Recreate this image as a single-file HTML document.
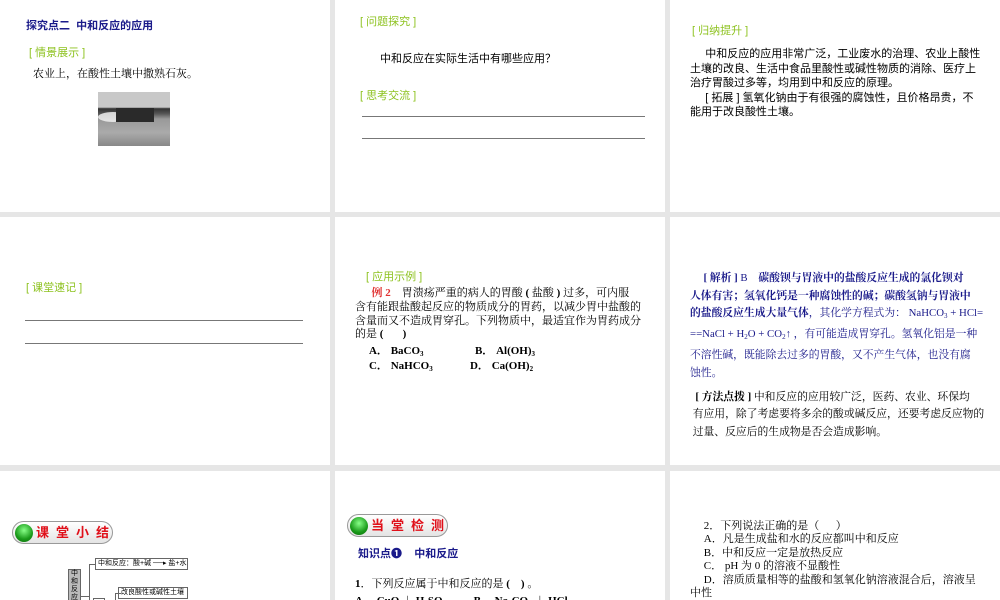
<!DOCTYPE html>
<html><head><meta charset="utf-8"><style>
*{margin:0;padding:0;box-sizing:border-box}
body{width:1000px;height:600px;background:#e6e6e6;position:relative;overflow:hidden;font-family:"Liberation Sans","Noto Sans CJK SC",sans-serif;color:#000}
.s{position:absolute;background:#fff;overflow:hidden}
.a{position:absolute;white-space:nowrap}
.g{color:#8dc21f;font-size:11px}
.serif{font-family:"Liberation Serif","Noto Serif CJK SC",serif}
.ln{position:absolute;height:1px;background:#777}
.pill{position:absolute;height:23px;border:1px solid #999;border-radius:12px;background:linear-gradient(#fff,#e4e4e4);overflow:hidden}
.dot{position:absolute;left:2px;top:2px;width:18px;height:18px;border-radius:50%;background:radial-gradient(circle at 50% 35%,#8f8,#1a9a1a 60%,#0a6a0a)}
.pt{position:absolute;left:23px;top:3px;color:#e0101a;font-weight:bold;font-size:13px;letter-spacing:7px;white-space:nowrap;line-height:16px;font-family:"Liberation Sans","Noto Sans CJK SC",sans-serif}
sub{font-size:7px;vertical-align:-2px}
</style></head><body>

<div class="s" style="left:0;top:0;width:330px;height:212px">
 <div class="a" style="left:26px;top:17px;font-size:11px;font-weight:bold;color:#1a1a8a">探究点二&nbsp; 中和反应的应用</div>
 <div class="a g" style="left:29px;top:44px">[ 情景展示 ]</div>
 <div class="a serif" style="left:33px;top:65px;font-size:11px">农业上，在酸性土壤中撒熟石灰。</div>
 <div class="a" style="left:98px;top:92px;width:72px;height:54px;background:linear-gradient(#c8c8c8 0,#c8c8c8 28%,#333 31%,#555 40%,#999 50%,#aaa 75%,#888 100%)"></div>
 <div class="a" style="left:98px;top:112px;width:30px;height:10px;background:#eee;border-radius:50%;opacity:.85"></div>
 <div class="a" style="left:116px;top:108px;width:38px;height:14px;background:#2a2a2a"></div>
</div>

<div class="s" style="left:335px;top:0;width:330px;height:212px">
 <div class="a g" style="left:25px;top:13px">[ 问题探究 ]</div>
 <div class="a" style="left:45px;top:50px;font-size:11px">中和反应在实际生活中有哪些应用？</div>
 <div class="a g" style="left:25px;top:87px">[ 思考交流 ]</div>
 <div class="ln" style="left:27px;top:116px;width:283px"></div>
 <div class="ln" style="left:27px;top:138px;width:283px"></div>
</div>

<div class="s" style="left:670px;top:0;width:330px;height:212px">
 <div class="a g" style="left:22px;top:22px">[ 归纳提升 ]</div>
 <div class="a" style="left:20px;top:47px;font-size:11px;line-height:14.6px">&nbsp;&nbsp;&nbsp;&nbsp;&nbsp;中和反应的应用非常广泛，工业废水的治理、农业上酸性<br>土壤的改良、生活中食品里酸性或碱性物质的消除、医疗上<br>治疗胃酸过多等，均用到中和反应的原理。<br>&nbsp;&nbsp;&nbsp;&nbsp;&nbsp;[ 拓展 ] 氢氧化钠由于有很强的腐蚀性，且价格昂贵，不<br>能用于改良酸性土壤。</div>
</div>

<div class="s" style="left:0;top:217px;width:330px;height:248px">
 <div class="a g" style="left:26px;top:62px">[ 课堂速记 ]</div>
 <div class="ln" style="left:25px;top:103px;width:278px"></div>
 <div class="ln" style="left:25px;top:126px;width:278px"></div>
</div>

<div class="s serif" style="left:335px;top:217px;width:330px;height:248px">
 <div class="a g" style="left:31px;top:51px;font-family:'Liberation Sans','Noto Sans CJK SC',sans-serif">[ 应用示例 ]</div>
 <div class="a" style="left:20px;top:70px;font-size:11px;line-height:13.8px"><span style="color:#e03030;font-weight:bold">&nbsp;&nbsp;&nbsp;&nbsp;&nbsp;&nbsp;例 2</span>&nbsp;&nbsp;&nbsp; 胃溃疡严重的病人的胃酸 <b>(</b> 盐酸 <b>)</b> 过多，可内服<br>含有能跟盐酸起反应的物质成分的胃药，以减少胃中盐酸的<br>含量而又不造成胃穿孔。下列物质中，最适宜作为胃药成分<br>的是 <b>(&nbsp;&nbsp;&nbsp;&nbsp;&nbsp;&nbsp; )</b></div>
 <div class="a" style="left:34px;top:125px;font-size:11px;font-weight:bold">A．&nbsp;BaCO<sub>3</sub></div>
 <div class="a" style="left:140px;top:125px;font-size:11px;font-weight:bold">B．&nbsp;Al(OH)<sub>3</sub></div>
 <div class="a" style="left:34px;top:140px;font-size:11px;font-weight:bold">C．&nbsp;NaHCO<sub>3</sub></div>
 <div class="a" style="left:135px;top:140px;font-size:11px;font-weight:bold">D．&nbsp;Ca(OH)<sub>2</sub></div>
</div>

<div class="s serif" style="left:670px;top:217px;width:330px;height:248px">
 <div class="a" style="left:20px;top:53px;font-size:10.8px;line-height:17.7px;color:#1a1a8a">&nbsp;&nbsp;&nbsp;&nbsp;&nbsp;<b>[ 解析 ]</b> B&nbsp;&nbsp;&nbsp; <b>碳酸钡与胃液中的盐酸反应生成的氯化钡对</b><br><b>人体有害；氢氧化钙是一种腐蚀性的碱；碳酸氢钠与胃液中</b><br><b>的盐酸反应生成大量气体</b>，其化学方程式为： NaHCO<sub>3</sub> + HCl=<br>==NaCl + H<sub>2</sub>O + CO<sub>2</sub>↑ ，有可能造成胃穿孔。氢氧化铝是一种<br>不溶性碱，既能除去过多的胃酸，又不产生气体，也没有腐<br>蚀性。</div>
 <div class="a" style="left:20px;top:172px;font-size:10.8px;line-height:17.3px">&nbsp;&nbsp;<b>[ 方法点拨 ]</b> 中和反应的应用较广泛，医药、农业、环保均<br>&nbsp;有应用，除了考虑要将多余的酸或碱反应，还要考虑反应物的<br>&nbsp;过量、反应后的生成物是否会造成影响。</div>
</div>

<div class="s" style="left:0;top:471px;width:330px;height:129px">
 <div class="pill" style="left:12px;top:50px;width:101px"><div class="dot"></div><div class="pt">课堂小结</div></div>
 <div class="a" style="left:68px;top:98px;width:13px;height:40px;background:#bbb;border:1px solid #666;font-size:7px;line-height:8px;text-align:center;white-space:normal">中和反应</div>
 <div class="a" style="left:81px;top:125px;width:8px;height:1px;background:#666"></div>
 <div class="a" style="left:89px;top:93px;width:1px;height:40px;background:#666"></div>
 <div class="a" style="left:89px;top:93px;width:6px;height:1px;background:#666"></div>
 <div class="a" style="left:95px;top:87px;width:93px;height:12px;border:1px solid #666;font-size:7px;line-height:10px;padding-left:2px">中和反应：酸+碱 ──▸ 盐+水</div>
 <div class="a" style="left:93px;top:127px;width:12px;height:5px;border:1px solid #666"></div>
 <div class="a" style="left:115px;top:122px;width:6px;height:1px;background:#666"></div>
 <div class="a" style="left:115px;top:122px;width:1px;height:10px;background:#666"></div>
 <div class="a" style="left:118px;top:116px;width:70px;height:12px;border:1px solid #666;font-size:7px;line-height:10px;padding-left:2px">改良酸性或碱性土壤</div>
</div>

<div class="s serif" style="left:335px;top:471px;width:330px;height:129px">
 <div class="pill" style="left:12px;top:43px;width:101px"><div class="dot"></div><div class="pt">当堂检测</div></div>
 <div class="a" style="left:23px;top:74px;font-size:11px;font-weight:bold;color:#1a1a8a;font-family:'Liberation Sans','Noto Sans CJK SC',sans-serif">知识点❶&nbsp;&nbsp;&nbsp; 中和反应</div>
 <div class="a" style="left:20px;top:104px;font-size:11px"><b>1</b>．下列反应属于中和反应的是 <b>(&nbsp;&nbsp;&nbsp; )</b> 。</div>
 <div class="a" style="left:20px;top:121px;font-size:11px;font-weight:bold">A．&nbsp;CuO ＋ H<sub>2</sub>SO<sub>4</sub>&nbsp;&nbsp;&nbsp;&nbsp;&nbsp;&nbsp;&nbsp;&nbsp;&nbsp; B．&nbsp;Na<sub>2</sub>CO<sub>3</sub> ＋ HCl</div>
</div>

<div class="s serif" style="left:670px;top:471px;width:330px;height:129px">
 <div class="a" style="left:20px;top:49px;font-size:11px;line-height:13.4px">&nbsp;&nbsp;&nbsp;&nbsp;&nbsp;2．下列说法正确的是（&nbsp;&nbsp;&nbsp;&nbsp;&nbsp; ）<br>&nbsp;&nbsp;&nbsp;&nbsp;&nbsp;A．凡是生成盐和水的反应都叫中和反应<br>&nbsp;&nbsp;&nbsp;&nbsp;&nbsp;B．中和反应一定是放热反应<br>&nbsp;&nbsp;&nbsp;&nbsp;&nbsp;C． pH 为 0 的溶液不显酸性<br>&nbsp;&nbsp;&nbsp;&nbsp;&nbsp;D．溶质质量相等的盐酸和氢氧化钠溶液混合后，溶液呈<br>中性</div>
</div>
</body></html>
